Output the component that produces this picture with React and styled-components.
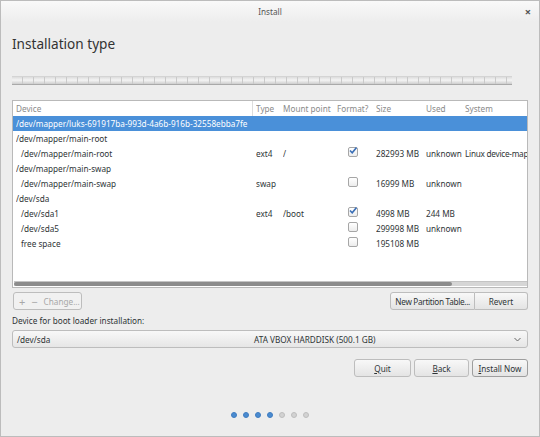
import React from "react"
import styled, { createGlobalStyle } from "styled-components"

const Global = createGlobalStyle`
  html, body { margin: 0; padding: 0; background: #ededed; }
  body { font-family: "Noto Sans", "Open Sans", sans-serif; color: #2e3436; }
`

const Window = styled.div`
  width: 540px;
  height: 437px;
  box-sizing: border-box;
  border: 1px solid #bcbcbc;
  background: #ededed;
  display: flex;
  flex-direction: column;
  overflow: hidden;
`

const TitleBar = styled.div`
  height: 21px;
  flex: none;
  display: grid;
  grid-template-columns: 1fr auto 1fr;
  align-items: center;
  background: linear-gradient(#f9f9f9, #ededed);
  font-size: 8.2px;
  color: #555;
`

const Close = styled.span`
  justify-self: end;
  margin-right: 8px;
  font-size: 11px;
  font-weight: bold;
  color: #555;
`

const Body = styled.div`
  display: flex;
  flex-direction: column;
  padding: 0 11px;
`

const Heading = styled.h1`
  margin: 13px 0 0;
  font-size: 13.6px;
  line-height: 18px;
  font-weight: normal;
  color: #333;
`

const PartBar = styled.div`
  margin: 23px 16px 0 0;
  height: 7px;
  border-top: 1px solid #d4d4d4;
  border-bottom: 1px solid #a9a9a9;
  background:
    repeating-linear-gradient(90deg, transparent 0 10px, #c9c9c9 10px 11px),
    linear-gradient(#dcdcdc, #f4f4f4 45%, #cdcdcd);
`

const TableBox = styled.div`
  margin-top: 15px;
  height: 188px;
  box-sizing: border-box;
  border: 1px solid #b9b9b9;
  background: #fff;
  display: flex;
  flex-direction: column;
  overflow: hidden;
`

const Row = styled.div`
  display: grid;
  grid-template-columns: 240px 27px 54px 39px 50px 39px 1fr;
  height: 15px;
  align-items: center;
  padding-left: 3px;
  font-size: 8.2px;
  white-space: nowrap;
  background: ${p => (p.$selected ? "#4a90d9" : "transparent")};
  color: ${p => (p.$selected ? "#fff" : "#2e3436")};
`

const HeadRow = styled(Row)`
  color: #8a8a8a;
`

const Cell = styled.span`
  overflow: hidden;
  padding-left: ${p => (p.$indent ? "5px" : "0")};
  border-right: ${p => (p.$sep ? "1px solid #ddd" : "none")};
  margin-right: ${p => (p.$sep ? "3px" : "0")};
  letter-spacing: ${p => (p.$tight ? "-0.25px" : "normal")};
  line-height: 15px;
`

const Check = styled.span`
  display: inline-flex;
  width: 8px;
  height: 8px;
  margin-left: 11px;
  border: 1px solid #a6a6a6;
  border-radius: 2px;
  background: linear-gradient(#fff, #ececec);
  align-items: center;
  justify-content: center;
  position: relative;
`

const Filler = styled.div`
  flex: 1;
`

const Scroll = styled.div`
  margin: 0 0 1px 1px;
  height: 4px;
  background: #d6d6d6;
  border-top: 1px solid #c4c4c4;
  display: flex;
`

const Thumb = styled.div`
  width: 438px;
  background: #8c8c8c;
  border-radius: 2px;
`

const ToolRow = styled.div`
  margin-top: 4px;
  display: flex;
  justify-content: space-between;
`

const Group = styled.div`
  display: flex;
`

const Button = styled.button`
  height: 18px;
  padding: 0 ${p => (p.$pad != null ? p.$pad : 3)}px;
  font-family: inherit;
  font-size: 8.2px;
  white-space: nowrap;
  color: ${p => (p.$disabled ? "#a8a8a8" : "#2e3436")};
  border: 1px solid ${p => (p.$strong ? "#9e9e9e" : "#bdbdbd")};
  border-radius: ${p => p.$radius || "3px"};
  background: ${p => (p.$disabled ? "#f1f1f1" : "linear-gradient(#f8f8f8, #e4e4e4)")};
  display: inline-flex;
  align-items: center;
  justify-content: ${p => (p.$start ? "flex-start" : "center")};
  gap: 6px;
  width: ${p => (p.$w ? p.$w + "px" : "auto")};
  letter-spacing: ${p => (p.$tight ? "-0.3px" : "normal")};
  box-sizing: border-box;
  u { text-decoration: underline; text-underline-offset: 1px; }
`

const Sign = styled.span`
  font-size: 11px;
  line-height: 1;
`

const Label = styled.div`
  margin-top: 5px;
  font-size: 8.2px;
  line-height: 12px;
  color: #2e3436;
`

const Combo = styled.div`
  margin-top: 3px;
  height: 18px;
  box-sizing: border-box;
  border: 1px solid #bdbdbd;
  border-radius: 3px;
  background: linear-gradient(#f8f8f8, #e6e6e6);
  display: grid;
  grid-template-columns: 237px 1fr auto;
  align-items: center;
  padding: 0 6px 0 4px;
  font-size: 8.2px;
`

const Chevron = styled.svg`
  width: 7px;
  height: 5px;
`

const Actions = styled.div`
  margin-top: 11px;
  display: flex;
  justify-content: flex-end;
  gap: 3px;
`

const Dots = styled.div`
  margin-top: 35px;
  display: flex;
  justify-content: center;
  gap: 6px;
`

const Dot = styled.span`
  width: 6px;
  height: 6px;
  box-sizing: border-box;
  border-radius: 50%;
  background: ${p => (p.$on ? "#4a8bd0" : "#d2d2d2")};
  border: 1px solid ${p => (p.$on ? "#3f7cc0" : "#bdbdbd")};
`

const CheckMark = () => (
  <svg width="8" height="7" viewBox="0 0 8 7" style={{ position: "absolute", top: -1, left: 0 }}>
    <path d="M1 3.5 L3.2 5.8 L7.5 0.5" fill="none" stroke="#3b6fb6" strokeWidth="1.6" />
  </svg>
)

const rows = [
  { dev: "/dev/mapper/luks-691917ba-993d-4a6b-916b-32558ebba7fe", selected: true },
  { dev: "/dev/mapper/main-root" },
  { dev: "/dev/mapper/main-root", child: true, type: "ext4", mount: "/", fmt: "on", size: "282993 MB", used: "unknown", sys: "Linux device-mapp" },
  { dev: "/dev/mapper/main-swap" },
  { dev: "/dev/mapper/main-swap", child: true, type: "swap", fmt: "off", size: "16999 MB", used: "unknown" },
  { dev: "/dev/sda" },
  { dev: "/dev/sda1", child: true, type: "ext4", mount: "/boot", fmt: "on", size: "4998 MB", used: "244 MB" },
  { dev: "/dev/sda5", child: true, fmt: "off", size: "299998 MB", used: "unknown" },
  { dev: "free space", child: true, fmt: "off", size: "195108 MB" },
]

export default function App() {
  return (
    <Window>
      <Global />
      <TitleBar>
        <span />
        <span>Install</span>
        <Close>×</Close>
      </TitleBar>
      <Body>
        <Heading>Installation type</Heading>
        <PartBar />
        <TableBox>
          <HeadRow>
            <Cell $sep>Device</Cell>
            <Cell>Type</Cell>
            <Cell>Mount point</Cell>
            <Cell>Format?</Cell>
            <Cell>Size</Cell>
            <Cell>Used</Cell>
            <Cell>System</Cell>
          </HeadRow>
          {rows.map((r, i) => (
            <Row key={i} $selected={r.selected}>
              <Cell $indent={r.child}>{r.dev}</Cell>
              <Cell>{r.type}</Cell>
              <Cell>{r.mount}</Cell>
              <Cell>
                {r.fmt && <Check>{r.fmt === "on" && <CheckMark />}</Check>}
              </Cell>
              <Cell>{r.size}</Cell>
              <Cell>{r.used}</Cell>
              <Cell $tight>{r.sys}</Cell>
            </Row>
          ))}
          <Filler />
          <Scroll>
            <Thumb />
          </Scroll>
        </TableBox>
        <ToolRow>
          <Button $disabled $start $w={69} $pad={5} style={{ marginLeft: 1 }}>
            <Sign>+</Sign>
            <Sign>−</Sign>
            <span>Change...</span>
          </Button>
          <Group>
            <Button $radius="3px 0 0 3px" $pad={4} $tight>New Partition Table...</Button>
            <Button $radius="0 3px 3px 0" $w={53} style={{ borderLeft: "none" }}>Revert</Button>
          </Group>
        </ToolRow>
        <Label>Device for boot loader installation:</Label>
        <Combo>
          <span>/dev/sda</span>
          <span>ATA VBOX HARDDISK (500.1 GB)</span>
          <Chevron viewBox="0 0 7 5">
            <path d="M0.5 1 L3.5 4 L6.5 1" fill="none" stroke="#666" strokeWidth="1" />
          </Chevron>
        </Combo>
        <Actions>
          <Button $w={57}><span><u>Q</u>uit</span></Button>
          <Button $w={55}><span><u>B</u>ack</span></Button>
          <Button $w={56} $strong><span><u>I</u>nstall Now</span></Button>
        </Actions>
        <Dots>
          {[1, 1, 1, 1, 0, 0, 0].map((on, i) => (
            <Dot key={i} $on={on} />
          ))}
        </Dots>
      </Body>
    </Window>
  )
}
